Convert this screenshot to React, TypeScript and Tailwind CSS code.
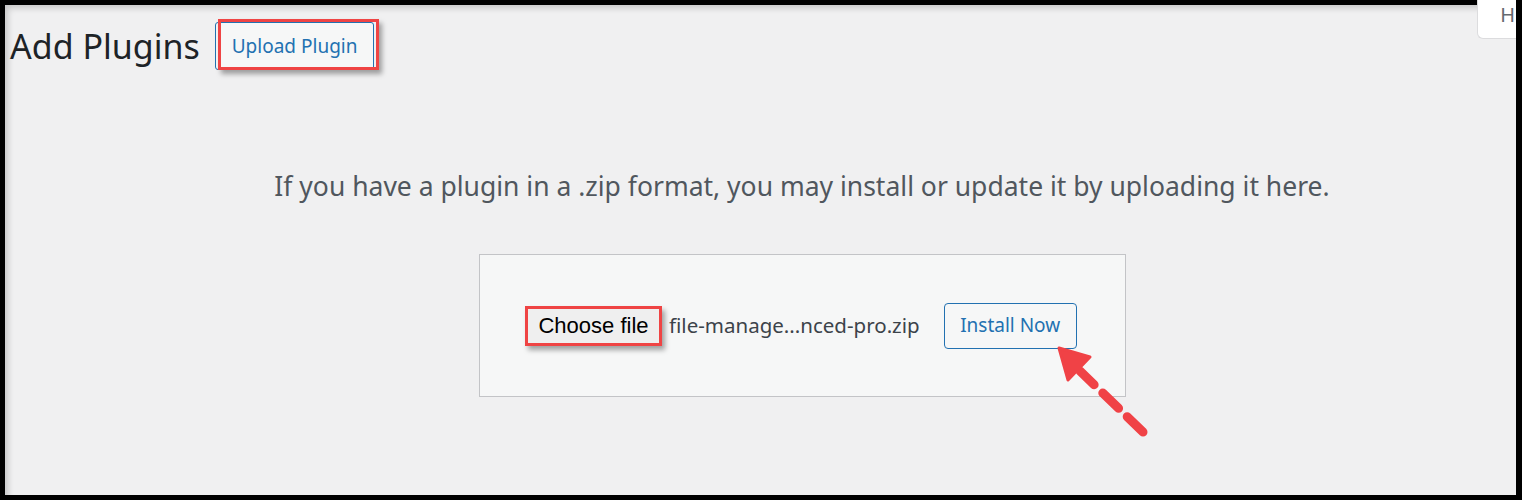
import React from 'react'

const sans = { fontFamily: '"Noto Sans", "Open Sans", sans-serif' }

function DashedArrow() {
  return (
    <svg className="absolute left-[1035px] top-[325px] pointer-events-none" width="120" height="120" viewBox="0 0 120 120">
      <line x1="103" y1="102" x2="40" y2="41" stroke="#f04246" strokeWidth="9" strokeDasharray="22 12" strokeLinecap="round" />
      <polygon points="19,18 50,27 28,50" fill="#f04246" stroke="#f04246" strokeWidth="3" strokeLinejoin="round" />
    </svg>
  )
}

export default function App() {
  return (
    <div className="w-[1522px] h-[500px] bg-black pt-[5px] pl-[5px] pr-[6px] pb-[5px] overflow-hidden">
      <div className="relative h-full bg-[#f0f0f1] shadow-[inset_6px_6px_6px_-3px_rgba(0,0,0,0.18)]" style={sans}>
        {/* top right help tab */}
        <div className="absolute right-0 -top-[5px] w-[39px] h-[39px] bg-white border border-[#dcdcde] border-t-0 border-r-0 rounded-bl-[6px] flex justify-end pr-[1px] pt-[5px]">
          <span className="text-[20px] leading-none text-[#646970]">H</span>
        </div>

        {/* header */}
        <div className="flex items-center pt-[17px] pl-[5px]">
          <h1 className="text-[34px] leading-[44px] text-[#1d2327] font-normal">Add Plugins</h1>
          <div className="relative ml-[15px]">
            <button className="h-[48px] px-[16px] border border-[#2271b1] rounded-[3px] bg-[#f6f7f7] text-[19px] text-[#2271b1]">
              Upload Plugin
            </button>
            <div className="absolute left-[3px] -top-[3px] w-[161px] h-[51px] border-[3px] border-[#ef4444] shadow-[3px_4px_5px_rgba(0,0,0,0.35)]" />
          </div>
        </div>

        {/* description */}
        <p className="mt-[100px] pl-[83px] text-center text-[26.5px] leading-[32px] text-[#50575e]">
          If you have a plugin in a .zip format, you may install or update it by uploading it here.
        </p>

        {/* upload form */}
        <div className="ml-[474px] mt-[52px] w-[647px] h-[143px] bg-[#f6f7f7] border border-[#c3c4c7] flex items-center pl-[45px]">
          <div className="border-[3px] border-[#ef4444] shadow-[3px_4px_5px_rgba(0,0,0,0.35)]">
            <div className="h-[34px] w-[131px] bg-[#efefef] flex items-center justify-center text-[22px] text-black" style={{ fontFamily: '"Liberation Sans", Arial, sans-serif' }}>
              Choose file
            </div>
          </div>
          <span className="ml-[7px] text-[20.5px] text-[#3c434a]">file-manage...nced-pro.zip</span>
          <button className="ml-[24px] h-[46px] w-[133px] border border-[#2271b1] rounded-[4px] bg-[#f6f7f7] text-[19px] text-[#2271b1]">
            Install Now
          </button>
        </div>

        <DashedArrow />
      </div>
    </div>
  )
}
